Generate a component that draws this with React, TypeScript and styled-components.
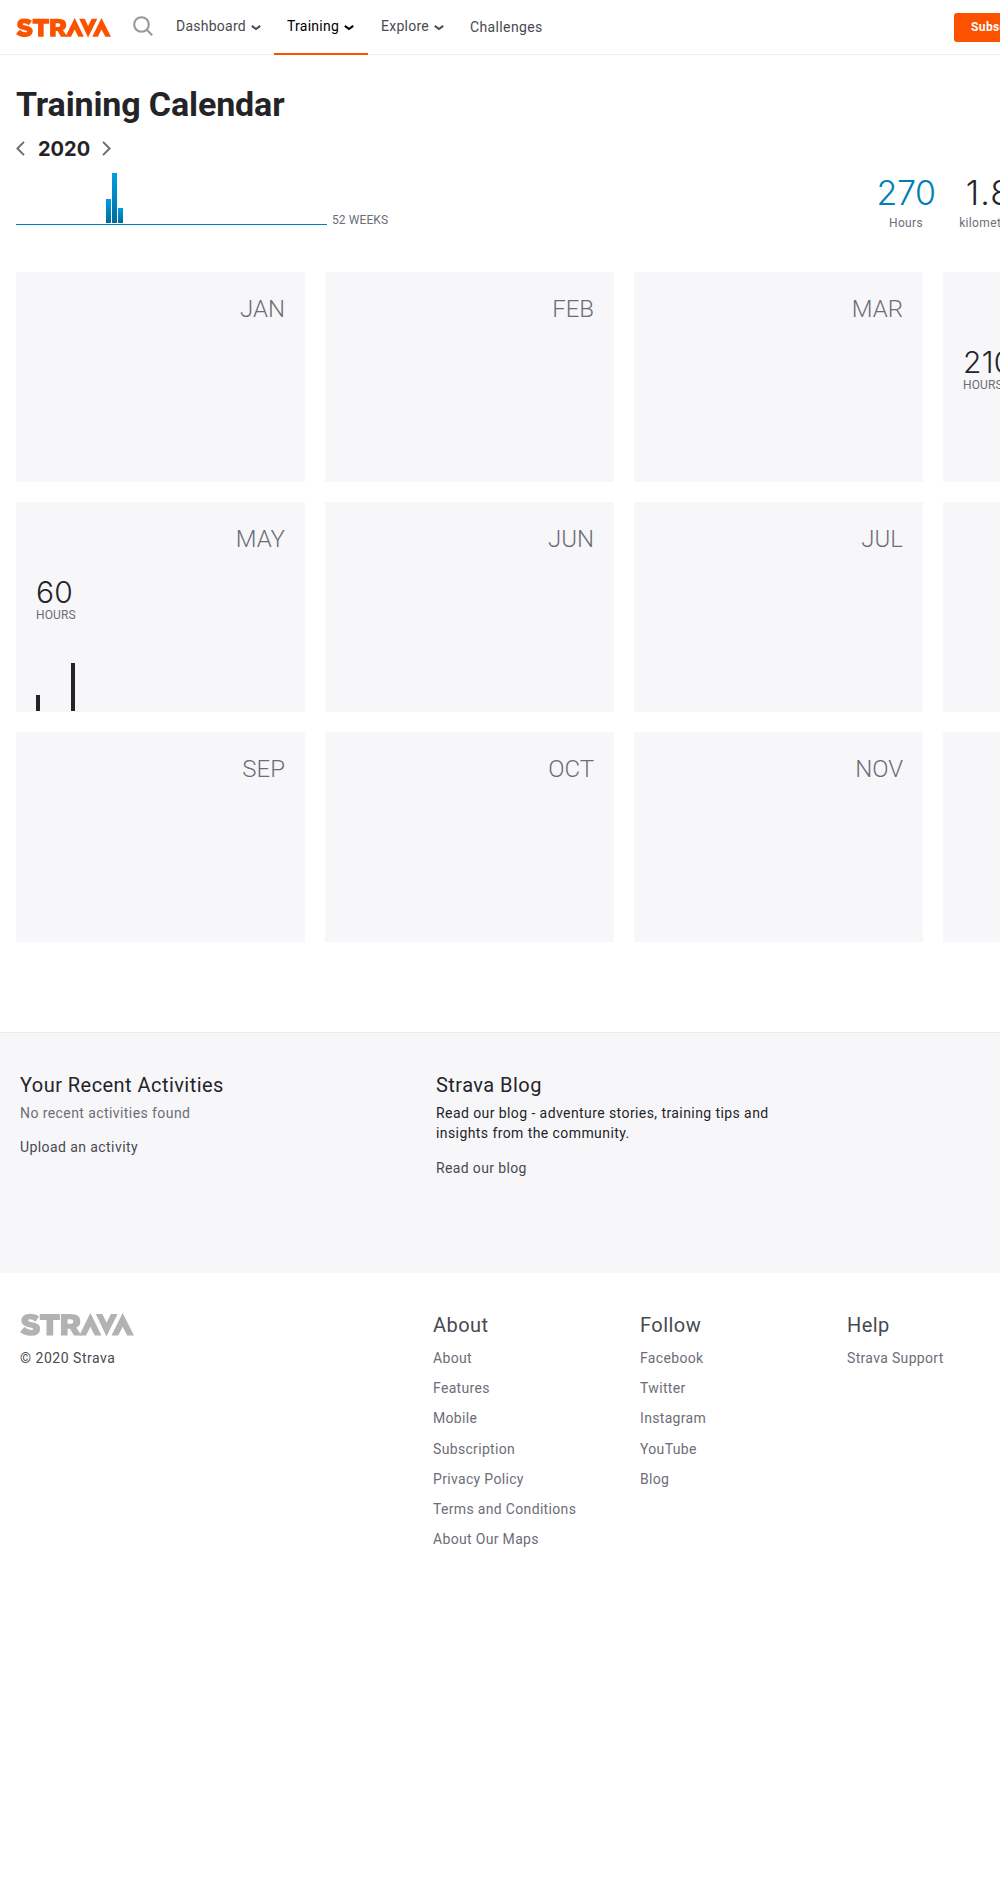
import React from "react";
import styled, { createGlobalStyle } from "styled-components";

const GlobalStyle = createGlobalStyle`
  html, body { margin: 0; padding: 0; background: #fff; overflow-x: hidden; }
  body { font-family: Roboto, "Liberation Sans", sans-serif; color: #242428; font-size: 14px; line-height: 20px; min-height: 1903px; }
  * { box-sizing: border-box; }
  h1, h2, p, ul { margin: 0; padding: 0; font-weight: 400; }
  ul { list-style: none; }
  a { color: inherit; text-decoration: none; }
`;

const Page = styled.div`
  width: 1000px;
  overflow: hidden;
`;

/* ---------- header ---------- */
const Header = styled.header`
  display: flex;
  width: 1232px;
  height: 55px;
  padding-left: 16px;
  border-bottom: 1px solid #f0f0f5;
`;
const Brand = styled.a`
  padding-top: 18px;
  width: 117px;
  flex: none;
`;
const SearchButton = styled.a`
  width: 32px;
  padding-top: 16px;
  flex: none;
`;
const NavItem = styled.a<{ $width: number; $active?: boolean; $pad?: number; $drop?: number; $ls: number }>`
  display: flex;
  flex: none;
  width: ${(p) => p.$width}px;
  height: ${(p) => (p.$active ? 55 : 54)}px;
  padding: ${(p) => 16 + (p.$drop ?? 0)}px 0 0 ${(p) => p.$pad ?? 11}px;
  color: ${(p) => (p.$active ? "#000" : "#494950")};
  letter-spacing: ${(p) => p.$ls}px;
  border-bottom: ${(p) => (p.$active ? "2px solid #fc5200" : "0")};
  & > svg { margin: 9px 0 0 5px; }
`;
const Subscribe = styled.a`
  width: 110px;
  height: 29px;
  margin-top: 13px;
  padding: 0 17px;
  border-radius: 3px;
  background: #fc5200;
  color: #fff;
  font-size: 12px;
  line-height: 28px;
  font-weight: 700;
  letter-spacing: 0.4px;
`;
const HeaderRight = styled.div`
  display: flex;
  margin-left: auto;
  width: 278px;
`;

/* ---------- year summary ---------- */
const Main = styled.main`
  width: 1232px;
  height: 977px;
  padding: 25px 0 0 16px;
`;
const Title = styled.h1`
  font-size: 34px;
  line-height: 48px;
  font-weight: 700;
  letter-spacing: -0.13px;
`;
const YearNav = styled.div`
  display: flex;
  align-items: center;
  height: 40px;
  & > svg { display: block; }
`;
const Year = styled.span`
  width: 77px;
  padding: 1px 0 0 13px;
  font: 700 20px/24px Inter, sans-serif;
`;
const Summary = styled.div`
  display: flex;
  height: 104px;
  padding-top: 5px;
`;
const WeekChart = styled.div`
  display: flex;
  align-items: flex-end;
  gap: 1px;
  width: 311px;
  height: 52px;
  padding-bottom: 1px;
  border-bottom: 1px solid #007fb6;
`;
const WeekBar = styled.i`
  width: 5px;
  background: linear-gradient(#009fe3, #006a9c);
`;
const ChartLabel = styled.span`
  width: 530px;
  padding: 38px 0 0 5px;
  color: #6d6d78;
  font-size: 12px;
  line-height: 18px;
  letter-spacing: 0.1px;
`;
const Stat = styled.div<{ $color: string; $width: number; $ls: number }>`
  flex: none;
  width: ${(p) => p.$width}px;
  text-align: center;
  color: #6d6d78;
  font-size: 12px;
  line-height: 18px;
  letter-spacing: 0.35px;
  & > strong {
    display: block;
    height: 41px;
    color: ${(p) => p.$color};
    font: 300 34px/40px Inter, sans-serif;
    letter-spacing: ${(p) => p.$ls}px;
  }
`;

/* ---------- months ---------- */
const Months = styled.div`
  display: grid;
  grid-template-columns: repeat(4, 289px);
  grid-auto-rows: 210px;
  gap: 20px;
`;
const MonthCard = styled.section`
  display: flex;
  flex-direction: column;
  padding: 20px 20px 1px;
  background: #f7f7fa;
`;
const MonthName = styled.h2`
  height: 54px;
  text-align: right;
  color: #6d6d78;
  font-size: 24px;
  line-height: 34px;
  font-weight: 300;
`;
const MonthHours = styled.div`
  height: 31px;
  color: #242428;
  font: 300 30px/32px Inter, sans-serif;
  letter-spacing: 0.3px;
`;
const MonthUnit = styled.div`
  color: #6d6d78;
  font-size: 12px;
  line-height: 16px;
  letter-spacing: 0.1px;
`;
const DayChart = styled.div`
  display: flex;
  align-items: flex-end;
  gap: 1px;
  flex: 1;
`;
const DayBar = styled.i`
  width: 4px;
  background: #242428;
`;

/* ---------- promo ---------- */
const Promo = styled.div`
  display: flex;
  width: 1232px;
  height: 241px;
  padding: 39px 0 0 20px;
  border-top: 1px solid #ececf0;
  background: #f7f7fa;
`;
const PromoColumn = styled.div<{ $width: number }>`
  width: ${(p) => p.$width}px;
  padding-right: 60px;
`;
const SectionTitle = styled.h2<{ $color?: string; $gap?: number }>`
  margin-bottom: ${(p) => p.$gap ?? 0}px;
  color: ${(p) => p.$color ?? "#242428"};
  font-size: 20px;
  line-height: 26px;
  letter-spacing: 0.45px;
`;
const Copy = styled.p<{ $color?: string; $gap?: number; $ls?: number }>`
  margin-top: ${(p) => p.$gap ?? 0}px;
  color: ${(p) => p.$color ?? "#242428"};
  letter-spacing: ${(p) => p.$ls ?? 0.42}px;
`;

/* ---------- footer ---------- */
const Footer = styled.footer`
  display: flex;
  width: 1232px;
  padding: 39px 0 0 20px;
`;
const FooterColumn = styled.div<{ $width: number }>`
  width: ${(p) => p.$width}px;
  & > svg { margin-top: 1px; }
`;
const FooterLinks = styled.ul`
  color: #6d6d78;
  letter-spacing: 0.33px;
  & > li { height: 30.2px; }
`;
const Logo = styled.svg`
  display: block;
`;

const StravaLogo = ({ width, color }: { width: number; color: string }) => (
  <Logo width={width} height={(width * 70) / 340} viewBox="0 0 340 70" fill={color}>
    <path d="M0 57L13 42Q23 51 34 51Q40 51 40 48Q40 45 29 43Q4 39 4 23Q4 2 31 2Q47 2 57 10L46 26Q37 19 29 19Q24 19 24 22Q24 25 34 27Q60 31 60 46Q60 68 33 68Q12 68 0 57Z" />
    <path d="M59 3H119V21H99V67H79V21H59Z" />
    <path fillRule="evenodd" d="M122 3H151Q180 3 180 25Q180 38 168 43L183 67H161L149 47H142V67H122ZM142 19V32H150Q159 32 159 25Q159 19 150 19Z" />
    <path d="M210 0L243 67H223L210 41L197 67H177Z" />
    <path d="M226 3H246L258 29L271 3H291L258 70Z" />
    <path d="M306 0L340 67H320L306 41L293 67H273Z" />
  </Logo>
);

const Caret = () => (
  <svg width="10" height="6" viewBox="0 0 10 6" fill="none" stroke="currentColor" strokeWidth="2">
    <path d="M0.8 0.9L5 4L9.2 0.9" />
  </svg>
);

const Chevron = ({ flip }: { flip?: boolean }) => (
  <svg width="9" height="15" viewBox="0 0 9 15" fill="none" stroke="#6b6b6b" strokeWidth="1.9">
    <path d={flip ? "M1 0.8L7.6 7.5L1 14.2" : "M8 0.8L1.4 7.5L8 14.2"} />
  </svg>
);

const weeks = Array.from({ length: 52 }, (_, i) => ({ 15: 24, 16: 50, 17: 15 } as Record<number, number>)[i] ?? 0);
const mayDays = [16, 0, 0, 0, 0, 0, 0, 48];

const months: { name: string; hours?: string; days?: number[] }[] = [
  { name: "JAN" }, { name: "FEB" }, { name: "MAR" }, { name: "APR", hours: "210" },
  { name: "MAY", hours: "60", days: mayDays }, { name: "JUN" }, { name: "JUL" }, { name: "AUG" },
  { name: "SEP" }, { name: "OCT" }, { name: "NOV" }, { name: "DEC" },
];

const footerColumns = [
  { title: "About", links: ["About", "Features", "Mobile", "Subscription", "Privacy Policy", "Terms and Conditions", "About Our Maps"] },
  { title: "Follow", links: ["Facebook", "Twitter", "Instagram", "YouTube", "Blog"] },
  { title: "Help", links: ["Strava Support"] },
];

export default function App() {
  return (
    <Page>
      <GlobalStyle />
      <Header>
        <Brand><StravaLogo width={95} color="#fc5200" /></Brand>
        <SearchButton>
          <svg width="20" height="20" viewBox="0 0 20 20" fill="none" stroke="#999" strokeWidth="2.1">
            <circle cx="8.5" cy="8.5" r="7.3" />
            <path d="M13.5 13.5L19.2 19.2" />
          </svg>
        </SearchButton>
        <NavItem $width={109} $ls={0.25}>Dashboard<Caret /></NavItem>
        <NavItem $width={94} $ls={0.25} $pad={13} $active>Training<Caret /></NavItem>
        <NavItem $width={91} $ls={0.25} $pad={13}>Explore<Caret /></NavItem>
        <NavItem $width={100} $ls={0.37} $drop={1}>Challenges</NavItem>
        <HeaderRight><Subscribe>Subscribe</Subscribe></HeaderRight>
      </Header>

      <Main>
        <Title>Training Calendar</Title>
        <YearNav><Chevron /><Year>2020</Year><Chevron flip /></YearNav>
        <Summary>
          <WeekChart>
            {weeks.map((h, i) => <WeekBar key={i} style={{ height: h }} />)}
          </WeekChart>
          <ChartLabel>52 WEEKS</ChartLabel>
          <Stat $color="#007fb6" $width={98} $ls={-0.5}><strong>270</strong>Hours</Stat>
          <Stat $color="#242428" $width={68} $ls={1.2}><strong>1.8</strong>kilometers</Stat>
        </Summary>
        <Months>
          {months.map((m) => (
            <MonthCard key={m.name}>
              <MonthName>{m.name}</MonthName>
              {m.hours && <MonthHours>{m.hours}</MonthHours>}
              {m.hours && <MonthUnit>HOURS</MonthUnit>}
              {m.days && (
                <DayChart>
                  {m.days.map((h, i) => <DayBar key={i} style={{ height: h }} />)}
                </DayChart>
              )}
            </MonthCard>
          ))}
        </Months>
      </Main>

      <Promo>
        <PromoColumn $width={416}>
          <SectionTitle $gap={5}>Your Recent Activities</SectionTitle>
          <Copy $color="#6d6d78">No recent activities found</Copy>
          <Copy $color="#494950" $gap={14}>Upload an activity</Copy>
        </PromoColumn>
        <PromoColumn $width={416}>
          <SectionTitle $gap={5}>Strava Blog</SectionTitle>
          <Copy>Read our blog - adventure stories, training tips and<br />insights from the community.</Copy>
          <Copy $color="#494950" $gap={15} $ls={0.36}>Read our blog</Copy>
        </PromoColumn>
      </Promo>

      <Footer>
        <FooterColumn $width={413}>
          <StravaLogo width={114} color="#b2b2b2" />
          <Copy $color="#494950" $gap={12} $ls={0.52}>© 2020 Strava</Copy>
        </FooterColumn>
        {footerColumns.map((c) => (
          <FooterColumn key={c.title} $width={207}>
            <SectionTitle $color="#494950" $gap={10}>{c.title}</SectionTitle>
            <FooterLinks>
              {c.links.map((l) => <li key={l}><a>{l}</a></li>)}
            </FooterLinks>
          </FooterColumn>
        ))}
      </Footer>
    </Page>
  );
}
